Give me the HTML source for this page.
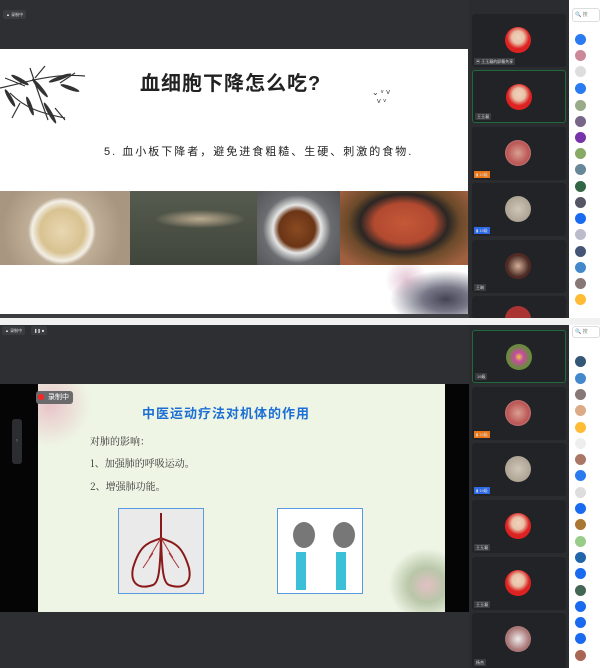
<!DOCTYPE html><html><head><meta charset="utf-8"><style>
*{margin:0;padding:0;box-sizing:border-box}
body{width:600px;height:668px;overflow:hidden;background:#fff;font-family:"Liberation Sans","Noto Sans CJK SC",sans-serif;position:relative}
.a{position:absolute}
.main{background:#2d2f33}
.col{background:#2a2c2f}
.tile{position:absolute;left:472px;width:94px;background:#222326;border-radius:3px}
.tile .av{position:absolute;left:33px;top:13px;width:26px;height:26px;border-radius:50%}
.tile .nm{position:absolute;left:2px;bottom:2px;height:7px;background:#3a3b3e;font-size:4px;color:#ddd;padding:0 2px;line-height:7px}
.sb{position:absolute;left:569px;width:31px;background:#fff}
.dot{position:absolute;left:575px;width:11px;height:11px;border-radius:50%}
.rec{position:absolute;height:9px;background:#3a3c40;font-size:4px;color:#ddd;line-height:9px;padding:0 3px;border-radius:2px}
</style></head><body>
<!-- top panel -->
<div class="a main" style="left:0;top:0;width:469px;height:318px"></div>
<div class="rec" style="left:3px;top:10px">▲ 录制中</div>
<div class="a" style="left:0;top:49px;width:468px;height:265px;background:#fff"></div>
<svg class="a" style="left:0;top:58px" width="90" height="70"><g stroke="#333" stroke-width="1.2" fill="none"><path d="M0 30C25 25 50 15 85 18M10 35C25 50 40 55 65 60M30 10C35 25 40 40 48 62M5 20l20 8M45 8l-10 12M60 25l15 -10M20 45l-8 15M55 50l10 12"/></g><g fill="#333"><ellipse cx="20" cy="22" rx="10" ry="2" transform="rotate(30 20 22)"/><ellipse cx="40" cy="30" rx="12" ry="2" transform="rotate(50 40 30)"/><ellipse cx="60" cy="20" rx="12" ry="2" transform="rotate(-20 60 20)"/><ellipse cx="50" cy="55" rx="12" ry="2" transform="rotate(60 50 55)"/><ellipse cx="10" cy="40" rx="10" ry="2" transform="rotate(60 10 40)"/><ellipse cx="70" cy="30" rx="10" ry="2" transform="rotate(20 70 30)"/><ellipse cx="30" cy="48" rx="10" ry="2" transform="rotate(70 30 48)"/></g></svg>
<div class="a" style="left:140px;top:67px;font-size:20px;color:#222;font-weight:bold;letter-spacing:1px">血细胞下降怎么吃?</div>
<div class="a" style="left:372px;top:88px;font-size:8px;color:#333">⌄ ᵛ ˅<br>&nbsp;&nbsp;˅ ᵛ</div>
<div class="a" style="left:104px;top:143px;font-size:11px;color:#222;letter-spacing:2px">5. 血小板下降者，避免进食粗糙、生硬、刺激的食物.</div>
<div class="a" style="left:0;top:191px;width:130px;height:74px;background:radial-gradient(circle at 62px 40px,#e8d7b2 0,#d8c291 22px,#f3efe7 30px,#bfae97 34px,#a99680 60px)"></div>
<div class="a" style="left:130px;top:191px;width:127px;height:74px;background:linear-gradient(#555b4e,#40463b)"></div>
<div class="a" style="left:150px;top:209px;width:100px;height:20px;background:radial-gradient(ellipse,#b8ac90 0,#8d8470 30%,rgba(0,0,0,0) 65%)"></div>
<div class="a" style="left:257px;top:191px;width:83px;height:74px;background:radial-gradient(circle at 40px 38px,#8a4a22 0,#6b3516 18px,#e6e6e6 24px,#6a6c6f 34px,#4d4f52 60px)"></div>
<div class="a" style="left:340px;top:191px;width:128px;height:74px;background:radial-gradient(ellipse at 64px 32px,#c45838 0,#b24a30 30px,#2a2624 44px,#6b4a2a 56px,#a06040 80px)"></div>
<div class="a" style="left:380px;top:265px;width:88px;height:49px;background:radial-gradient(ellipse at 75% 70%,#445 0,#778 25%,rgba(255,255,255,0) 60%),radial-gradient(circle at 30% 30%,#e4c6d4 0,rgba(255,255,255,0) 30%)"></div>
<div class="a" style="left:0;top:314px;width:469px;height:5px;background:#3a3c40"></div>
<div class="a col" style="left:469px;top:0;width:100px;height:318px"></div>
<div class="tile" style="top:14px;height:53px"><div class="av" style="background:radial-gradient(circle at 50% 40%,#f1d2bb 0,#e8c2a8 30%,#d22 55%)"></div><div class="nm">▣ 王玉凝的屏幕共享</div></div>
<div class="tile" style="top:70px;height:53px;border:1px solid #1f6a3a"><div class="av" style="background:radial-gradient(circle at 50% 40%,#f1d2bb 0,#e8c2a8 30%,#d22 55%)"></div><div class="nm">王玉凝</div></div>
<div class="tile" style="top:127px;height:53px"><div class="av" style="background:radial-gradient(circle,#d9a090,#b55 60%,#ccc)"></div><div class="nm" style="background:#e8781a">▮ 19级</div></div>
<div class="tile" style="top:183px;height:53px"><div class="av" style="background:radial-gradient(circle,#cfc6b8,#9e9484)"></div><div class="nm" style="background:#2e6ae6">▮ 19级</div></div>
<div class="tile" style="top:240px;height:53px"><div class="av" style="background:radial-gradient(circle,#d5b09a,#4a2a22 60%,#8a2030)"></div><div class="nm">王琳</div></div>
<div class="tile" style="top:296px;height:22px"><div class="av" style="top:10px;background:#a33"></div></div>
<div class="sb" style="top:0;height:318px"></div>
<div class="a" style="left:572px;top:8px;width:28px;height:14px;border:1px solid #ddd;border-radius:3px;font-size:5px;color:#888;line-height:12px;padding-left:2px">🔍 搜</div>
<div class="dot" style="top:34px;background:#2a7bf0"></div><div class="dot" style="top:50px;background:#c89"></div><div class="dot" style="top:66px;background:#ddd"></div><div class="dot" style="top:83px;background:#2a7bf0"></div><div class="dot" style="top:100px;background:#9a8"></div><div class="dot" style="top:116px;background:#768"></div><div class="dot" style="top:132px;background:#73a"></div><div class="dot" style="top:148px;background:#8a6"></div><div class="dot" style="top:164px;background:#689"></div><div class="dot" style="top:181px;background:#364"></div><div class="dot" style="top:197px;background:#556"></div><div class="dot" style="top:213px;background:#1a6af0"></div><div class="dot" style="top:229px;background:#bbc"></div><div class="dot" style="top:246px;background:#457"></div><div class="dot" style="top:262px;background:#48c"></div><div class="dot" style="top:278px;background:#877"></div><div class="dot" style="top:294px;background:#fb3"></div>
<!-- divider -->
<div class="a" style="left:0;top:318px;width:600px;height:7px;background:#f1f1f1"></div>
<!-- bottom panel -->
<div class="a main" style="left:0;top:325px;width:469px;height:343px"></div>
<div class="rec" style="left:2px;top:326px">▲ 录制中</div>
<div class="rec" style="left:31px;top:326px">❚❚ ■</div>
<div class="a" style="left:0;top:384px;width:469px;height:228px;background:#050505"></div>
<div class="a" style="left:12px;top:419px;width:10px;height:45px;background:#2c2d30;border-radius:3px;color:#888;font-size:6px;line-height:45px;text-align:center">›</div>
<div class="a" style="left:38px;top:384px;width:407px;height:228px;background:#eef5e5"></div>
<div class="a" style="left:38px;top:384px;width:60px;height:70px;background:radial-gradient(ellipse at 20% 30%,#e8c4c8 0,rgba(238,245,229,0) 60%)"></div>
<div class="a" style="left:385px;top:545px;width:60px;height:67px;background:radial-gradient(ellipse at 70% 60%,#e2c0c4 0,#b9c6a8 30%,rgba(238,245,229,0) 65%)"></div>
<div class="a" style="left:36px;top:391px;height:13px;background:#6a6a6c;border-radius:3px;color:#fff;font-size:7px;line-height:13px;padding:0 4px 0 12px">录制中</div>
<div class="a" style="left:38px;top:394px;width:6px;height:6px;border-radius:50%;background:#f22"></div>
<div class="a" style="left:142px;top:403px;font-size:13px;color:#1c6fd4;font-weight:bold;letter-spacing:1px">中医运动疗法对机体的作用</div>
<div class="a" style="left:90px;top:433px;font-size:10px;color:#333;font-family:'Noto Serif CJK SC',serif">对肺的影响：</div>
<div class="a" style="left:90px;top:455px;font-size:10px;color:#333;font-family:'Noto Serif CJK SC',serif">1、加强肺的呼吸运动。</div>
<div class="a" style="left:90px;top:478px;font-size:10px;color:#333;font-family:'Noto Serif CJK SC',serif">2、增强肺功能。</div>
<div class="a" style="left:118px;top:508px;width:86px;height:86px;border:1px solid #5a9ae0;background:#eaeaea"></div>
<svg class="a" style="left:118px;top:508px" width="86" height="86"><path d="M43 5v25M43 30c-10 5-20 3-28 30-3 15 5 22 20 17 5-2 7-10 8-47M43 30c10 5 20 3 28 30 3 15-5 22-20 17-5-2-7-10-8-47" stroke="#8a1a1a" stroke-width="2" fill="none"/><path d="M43 30l-12 20M43 30l12 20M35 45l-10 15M51 45l10 15" stroke="#a33" stroke-width="1" fill="none"/></svg>
<div class="a" style="left:277px;top:508px;width:86px;height:86px;border:1px solid #5a9ae0;background:#fff"></div>
<div class="a" style="left:293px;top:522px;width:22px;height:26px;border-radius:50%;background:#777"></div>
<div class="a" style="left:333px;top:522px;width:22px;height:26px;border-radius:50%;background:#777"></div>
<div class="a" style="left:296px;top:552px;width:10px;height:38px;background:#3cc0d8"></div>
<div class="a" style="left:336px;top:552px;width:10px;height:38px;background:#3cc0d8"></div>
<div class="a col" style="left:469px;top:325px;width:100px;height:343px"></div>
<div class="tile" style="top:330px;height:53px;border:1px solid #1f6a3a"><div class="av" style="background:radial-gradient(circle,#e8d040 0,#c84aa0 25%,#6a8a40 60%)"></div><div class="nm">19级</div></div>
<div class="tile" style="top:387px;height:53px"><div class="av" style="background:radial-gradient(circle,#d9a090,#b55 60%,#ccc)"></div><div class="nm" style="background:#e8781a">▮ 19级</div></div>
<div class="tile" style="top:443px;height:53px"><div class="av" style="background:radial-gradient(circle,#cfc6b8,#9e9484)"></div><div class="nm" style="background:#2e6ae6">▮ 19级</div></div>
<div class="tile" style="top:500px;height:53px"><div class="av" style="background:radial-gradient(circle at 50% 40%,#f1d2bb 0,#e8c2a8 30%,#d22 55%)"></div><div class="nm">王玉凝</div></div>
<div class="tile" style="top:557px;height:53px"><div class="av" style="background:radial-gradient(circle at 50% 40%,#f1d2bb 0,#e8c2a8 30%,#d22 55%)"></div><div class="nm">王玉凝</div></div>
<div class="tile" style="top:613px;height:55px"><div class="av" style="background:radial-gradient(circle,#eee,#a77 60%)"></div><div class="nm">杨杰</div></div>
<div class="sb" style="top:325px;height:343px"></div>
<div class="a" style="left:572px;top:326px;width:28px;height:12px;border:1px solid #ddd;border-radius:3px;font-size:5px;color:#888;line-height:10px;padding-left:2px">🔍 搜</div>
<div class="dot" style="top:356px;background:#357"></div><div class="dot" style="top:373px;background:#48c"></div><div class="dot" style="top:389px;background:#877"></div><div class="dot" style="top:405px;background:#da8"></div><div class="dot" style="top:422px;background:#fb3"></div><div class="dot" style="top:438px;background:#eee"></div><div class="dot" style="top:454px;background:#a76"></div><div class="dot" style="top:470px;background:#2a7bf0"></div><div class="dot" style="top:487px;background:#ddd"></div><div class="dot" style="top:503px;background:#1a6af0"></div><div class="dot" style="top:519px;background:#a73"></div><div class="dot" style="top:536px;background:#9c8"></div><div class="dot" style="top:552px;background:#26a"></div><div class="dot" style="top:568px;background:#1a6af0"></div><div class="dot" style="top:585px;background:#465"></div><div class="dot" style="top:601px;background:#1a6af0"></div><div class="dot" style="top:617px;background:#1a6af0"></div><div class="dot" style="top:633px;background:#1a6af0"></div><div class="dot" style="top:650px;background:#a65"></div>
</body></html>
